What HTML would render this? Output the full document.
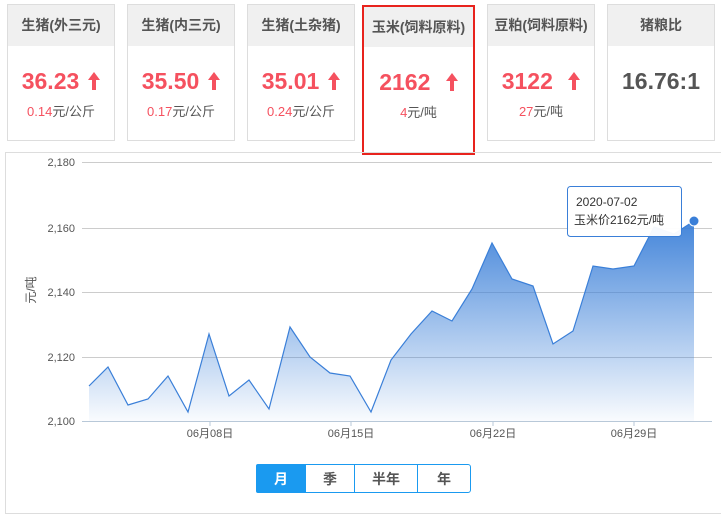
<!DOCTYPE html><html><head><meta charset="utf-8"><style>
body{margin:0;width:721px;height:503px;background:#fff;font-family:"Liberation Sans","Noto Sans CJK SC",sans-serif;position:relative;overflow:hidden}
.c{position:absolute;top:4px;width:106px;height:135px;border:1px solid #ddd;background:#fff;text-align:center}
.c .h{height:41px;background:#f0f0f0;line-height:41px;font-size:14px;font-weight:bold;color:#555}
.c .v{margin-top:20px;font-size:23px;font-weight:bold;color:#f5515f;height:30px;line-height:30px}
.c .s{font-size:13px;color:#555;margin-top:5px}
.c .s b{font-weight:normal;color:#f5515f}
.ar{display:inline-block;width:12px;height:18px;margin-left:9px;vertical-align:-1px}
.btn{position:absolute;top:464px;height:29px;line-height:29px;text-align:center;font-size:14px;font-weight:bold;color:#555;border:1px solid #1a9af0;box-sizing:border-box}
</style></head><body>
<div class="c" style="left:7px"><div class="h">生猪(外三元)</div><div class="v">36.23<svg class="ar" viewBox="0 0 12 18"><path d="M6 0L12 8H8V18H4V8H0Z" fill="#f5515f"/></svg></div><div class="s"><b>0.14</b>元/公斤</div></div>
<div class="c" style="left:127px"><div class="h">生猪(内三元)</div><div class="v">35.50<svg class="ar" viewBox="0 0 12 18"><path d="M6 0L12 8H8V18H4V8H0Z" fill="#f5515f"/></svg></div><div class="s"><b>0.17</b>元/公斤</div></div>
<div class="c" style="left:247px"><div class="h">生猪(土杂猪)</div><div class="v">35.01<svg class="ar" viewBox="0 0 12 18"><path d="M6 0L12 8H8V18H4V8H0Z" fill="#f5515f"/></svg></div><div class="s"><b>0.24</b>元/公斤</div></div>
<div class="c" style="left:362px;width:109px;height:146px;border:2px solid #e8231d;top:5px"><div class="h" style="height:40px;line-height:40px">玉米(饲料原料)</div><div class="v">2162&nbsp;<svg class="ar" viewBox="0 0 12 18"><path d="M6 0L12 8H8V18H4V8H0Z" fill="#f5515f"/></svg></div><div class="s"><b>4</b>元/吨</div></div>
<div class="c" style="left:487px"><div class="h">豆粕(饲料原料)</div><div class="v">3122&nbsp;<svg class="ar" viewBox="0 0 12 18"><path d="M6 0L12 8H8V18H4V8H0Z" fill="#f5515f"/></svg></div><div class="s"><b>27</b>元/吨</div></div>
<div class="c" style="left:607px"><div class="h">猪粮比</div><div class="v" style="color:#555">16.76:1</div></div>
<div style="position:absolute;left:5px;top:152px;width:720px;height:360px;border:1px solid #ddd"></div>
<svg style="position:absolute;left:0;top:0" width="721" height="503">
<defs><linearGradient id="g" x1="0" y1="0" x2="0" y2="1"><stop offset="0" stop-color="#3a7fd8" stop-opacity=".95"/><stop offset="1" stop-color="#3a7fd8" stop-opacity=".03"/></linearGradient></defs>
<g stroke="#ccc" stroke-width="1"><line x1="82" y1="162.5" x2="712" y2="162.5"/><line x1="82" y1="228.5" x2="712" y2="228.5"/><line x1="82" y1="292.5" x2="712" y2="292.5"/><line x1="82" y1="357.5" x2="712" y2="357.5"/></g>
<g font-size="11" fill="#555" text-anchor="end"><text x="75" y="166">2,180</text><text x="75" y="232">2,160</text><text x="75" y="296">2,140</text><text x="75" y="361">2,120</text><text x="75" y="425">2,100</text></g>
<text x="35" y="290" font-size="12" fill="#555" transform="rotate(-90 35 290)" text-anchor="middle">元/吨</text>
<path d="M89,386 L108,367 L128,405 L148,399 L168,376 L188,412 L209,334 L229,396 L249,380 L269,409 L290,327 L310,357 L330,373 L350,376 L371,412 L391,360 L411,334 L432,311 L452,321 L472,289 L492,243 L512,279 L533,286 L553,344 L573,331 L593,266 L613,269 L634,266 L654,227 L674,234 L694,221 L694,421 L89,421Z" fill="url(#g)"/>
<path d="M89,386 L108,367 L128,405 L148,399 L168,376 L188,412 L209,334 L229,396 L249,380 L269,409 L290,327 L310,357 L330,373 L350,376 L371,412 L391,360 L411,334 L432,311 L452,321 L472,289 L492,243 L512,279 L533,286 L553,344 L573,331 L593,266 L613,269 L634,266 L654,227 L674,234 L694,221" fill="none" stroke="#3a7fd8" stroke-width="1.2"/>
<line x1="82" y1="421.5" x2="712" y2="421.5" stroke="#b8c8d8"/>
<g stroke="#b8c8d8"><line x1="210" y1="421" x2="210" y2="426"/><line x1="351" y1="421" x2="351" y2="426"/><line x1="493" y1="421" x2="493" y2="426"/><line x1="634" y1="421" x2="634" y2="426"/></g>
<g font-size="11" fill="#555" text-anchor="middle"><text x="210" y="437">06月08日</text><text x="351" y="437">06月15日</text><text x="493" y="437">06月22日</text><text x="634" y="437">06月29日</text></g>
<circle cx="694" cy="221" r="5" fill="#3a7fd8" stroke="#fff" stroke-width="1"/>
<rect x="567.5" y="186.5" width="114" height="50" rx="3" fill="#fff" fill-opacity=".95" stroke="#3a7fd8"/>
<text x="576" y="206" font-size="12" fill="#333">2020-07-02</text><text x="574" y="224" font-size="12" fill="#333">玉米价2162元/吨</text>
</svg>
<div class="btn" style="left:256px;width:50px;background:#1a9af0;color:#fff;border-radius:2px 0 0 2px">月</div>
<div class="btn" style="left:305px;width:50px">季</div>
<div class="btn" style="left:354px;width:64px">半年</div>
<div class="btn" style="left:417px;width:54px;border-radius:0 3px 3px 0">年</div>
</body></html>
